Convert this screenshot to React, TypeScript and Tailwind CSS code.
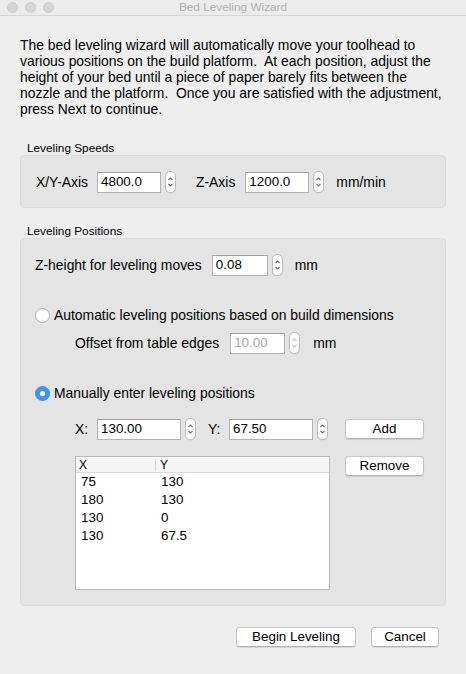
import React from "react";

function Stepper({ disabled = false }: { disabled?: boolean }) {
  const c = disabled ? "#c4c4c4" : "#6e6e6e";
  return (
    <div className="w-[11px] h-[22px] rounded-[5px] border border-[#bcbcbc] bg-white flex items-center justify-center shrink-0 shadow-[0_0.5px_0.5px_rgba(0,0,0,0.08)]">
      <svg width="7" height="14" viewBox="0 0 7 14">
        <path d="M1.5 5 L3.5 3 L5.5 5" fill="none" stroke={c} strokeWidth="1.1" />
        <path d="M1.5 9 L3.5 11 L5.5 9" fill="none" stroke={c} strokeWidth="1.1" />
      </svg>
    </div>
  );
}

function Field({ value, width, disabled = false }: { value: string; width: string; disabled?: boolean }) {
  return (
    <div
      className={`${width} h-[21px] shrink-0 bg-white border border-[#b3b3b3] border-t-[#a0a0a0] pl-[3px] flex items-center text-[13.4px] leading-none ${
        disabled ? "text-[#a6a6a6]" : "text-black"
      }`}
    >
      {value}
    </div>
  );
}

function Radio({ checked }: { checked: boolean }) {
  if (checked) {
    return (
      <div className="w-[15px] h-[15px] rounded-full bg-[#3d96f7] border border-[#3a8de8] flex items-center justify-center shrink-0">
        <div className="w-[5px] h-[5px] rounded-full bg-white" />
      </div>
    );
  }
  return <div className="w-[15px] h-[15px] rounded-full bg-white border border-[#b0b0b0] shrink-0" />;
}

function Button({ children, width }: { children: React.ReactNode; width: string }) {
  return (
    <div
      className={`${width} h-[20px] bg-white border border-[#c6c6c6] border-b-[#b0b0b0] rounded-[4px] flex items-center justify-center text-[13.4px] leading-none text-black shadow-[0_0.5px_1px_rgba(0,0,0,0.1)]`}
    >
      {children}
    </div>
  );
}

const rows = [
  ["75", "130"],
  ["180", "130"],
  ["130", "0"],
  ["130", "67.5"],
];

export default function App() {
  return (
    <div
      className="w-[466px] h-[674px] bg-[#eeeeee] flex flex-col text-black overflow-hidden"
      style={{ fontFamily: '"Liberation Sans", Arial, sans-serif' }}
    >
      {/* title bar */}
      <div className="h-[16px] shrink-0 bg-[#ececec] border-b border-[#d6d6d6] relative flex items-center justify-center">
        <div className="absolute left-[7px] top-[2px] flex gap-[7px]">
          <div className="w-[11px] h-[11px] rounded-full bg-[#d6d6d6] border border-[#cacaca]" />
          <div className="w-[11px] h-[11px] rounded-full bg-[#d6d6d6] border border-[#cacaca]" />
          <div className="w-[11px] h-[11px] rounded-full bg-[#d6d6d6] border border-[#cacaca]" />
        </div>
        <span className="text-[11.8px] text-[#b0b0b0] leading-none">Bed Leveling Wizard</span>
      </div>

      <p className="mt-[21px] px-[20px] text-[13.9px] leading-[16px] whitespace-pre">
        {"The bed leveling wizard will automatically move your toolhead to\nvarious positions on the build platform.  At each position, adjust the\nheight of your bed until a piece of paper barely fits between the\nnozzle and the platform.  Once you are satisfied with the adjustment,\npress Next to continue."}
      </p>

      {/* Leveling Speeds */}
      <div className="mt-[25px] ml-[27px] text-[11.8px] leading-[13px]">Leveling Speeds</div>
      <div className="mx-[20px] rounded-[4px] bg-[#e4e4e4] border border-[#dcdcdc] pt-[15px] pb-[14px] pl-[15px] flex items-center text-[13.9px] leading-[16px]">
        <span>X/Y-Axis</span>
        <div className="ml-[9px]">
          <Field value="4800.0" width="w-[64px]" />
        </div>
        <div className="ml-[4px]">
          <Stepper />
        </div>
        <span className="ml-[20px]">Z-Axis</span>
        <div className="ml-[10px]">
          <Field value="1200.0" width="w-[64px]" />
        </div>
        <div className="ml-[4px]">
          <Stepper />
        </div>
        <span className="ml-[12px]">mm/min</span>
      </div>

      {/* Leveling Positions */}
      <div className="mt-[17px] ml-[27px] text-[11.8px] leading-[13px]">Leveling Positions</div>
      <div className="mx-[20px] rounded-[4px] bg-[#e4e4e4] border border-[#dcdcdc] pt-[15px] pb-[15px] pl-[14px] flex flex-col text-[13.9px] leading-[16px]">
        <div className="flex items-center">
          <span>Z-height for leveling moves</span>
          <div className="ml-[10px]">
            <Field value="0.08" width="w-[56px]" />
          </div>
          <div className="ml-[4px]">
            <Stepper />
          </div>
          <span className="ml-[12px]">mm</span>
        </div>

        <div className="mt-[31px] flex items-center gap-[4px]">
          <Radio checked={false} />
          <span>Automatic leveling positions based on build dimensions</span>
        </div>
        <div className="mt-[9px] ml-[40px] flex items-center">
          <span>Offset from table edges</span>
          <div className="ml-[11px]">
            <Field value="10.00" width="w-[55px]" disabled />
          </div>
          <div className="ml-[4px]">
            <Stepper disabled />
          </div>
          <span className="ml-[13px]">mm</span>
        </div>

        <div className="mt-[31px] flex items-center gap-[4px]">
          <Radio checked />
          <span>Manually enter leveling positions</span>
        </div>

        <div className="mt-[17px] ml-[40px] flex items-center">
          <span className="w-[22px]">X:</span>
          <Field value="130.00" width="w-[84px]" />
          <div className="ml-[4px]">
            <Stepper />
          </div>
          <span className="ml-[12px] w-[21px]">Y:</span>
          <Field value="67.50" width="w-[84px]" />
          <div className="ml-[4px]">
            <Stepper />
          </div>
          <div className="ml-[17px]">
            <Button width="w-[79px]">Add</Button>
          </div>
        </div>

        <div className="mt-[16px] ml-[40px] flex items-start">
          <div className="w-[255px] h-[134px] bg-white border border-[#b9b9b9] flex flex-col">
            <div className="h-[16px] bg-[#f5f5f5] border-b border-[#dadada] flex items-center text-[12px] leading-none">
              <div className="w-[80px] pl-[3px] border-r border-[#dadada] h-[12px] flex items-center">X</div>
              <div className="pl-[4px]">Y</div>
            </div>
            {rows.map(([x, y], i) => (
              <div key={i} className="h-[18px] flex items-center text-[13.4px] leading-none">
                <div className="w-[80px] pl-[5px]">{x}</div>
                <div className="pl-[5px]">{y}</div>
              </div>
            ))}
          </div>
          <div className="ml-[15px]">
            <Button width="w-[79px]">Remove</Button>
          </div>
        </div>
      </div>

      <div className="mt-[21px] flex justify-end gap-[15px] pr-[27px]">
        <Button width="w-[120px]">Begin Leveling</Button>
        <Button width="w-[68px]">Cancel</Button>
      </div>
    </div>
  );
}
